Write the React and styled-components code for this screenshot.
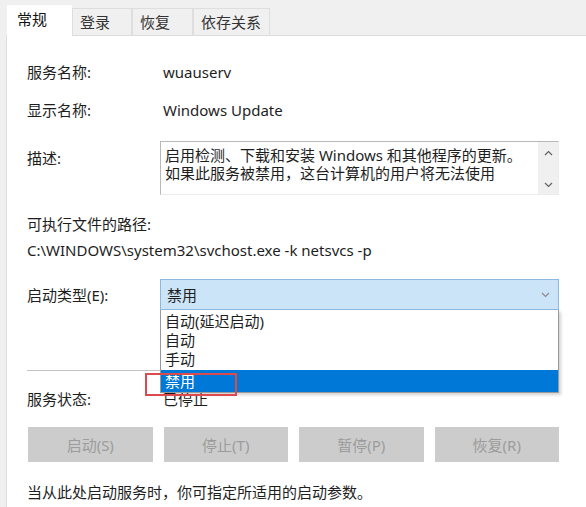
import React from "react";
import styled, { createGlobalStyle } from "styled-components";

const Global = createGlobalStyle`
  html, body { margin: 0; padding: 0; background: #f0f0f0; }
  * { box-sizing: border-box; }
  body {
    font-family: "Noto Sans", "Noto Sans CJK SC", sans-serif;
    font-size: 15px;
    color: #1e1e1e;
  }
`;

const Window = styled.div`
  width: 586px;
  height: 507px;
  display: flex;
  flex-direction: column;
  background: #f0f0f0;
  padding-left: 6px;
  overflow: hidden;
`;

const TabBar = styled.div`
  display: flex;
  align-items: flex-end;
  height: 36px;
  padding-left: 1px;
  border-bottom: 1px solid #dcdcdc;
`;

const Tab = styled.div`
  width: ${(p) => p.$w}px;
  height: ${(p) => (p.$active ? 31 : 27)}px;
  margin-bottom: ${(p) => (p.$active ? -1 : 0)}px;
  padding-left: ${(p) => (p.$active ? 10 : 7)}px;
  padding-top: 3px;
  background: ${(p) => (p.$active ? "#ffffff" : "#f0f0f0")};
  border: 1px solid ${(p) => (p.$active ? "#ffffff" : "#dedede")};
  border-bottom: none;
  border-left: ${(p) => (p.$active ? "none" : "1px solid #dedede")};
  color: ${(p) => (p.$active ? "#111" : "#333")};
  line-height: 20px;
  white-space: nowrap;
  position: relative;
  z-index: ${(p) => (p.$active ? 1 : 0)};
`;

const Panel = styled.div`
  flex: 1;
  background: #ffffff;
  border-left: 1px solid #dcdcdc;
  padding: 26px 27px 0 20px;
  display: flex;
  flex-direction: column;
`;

const Row = styled.div`
  display: grid;
  grid-template-columns: 133px 1fr;
  align-items: ${(p) => p.$align || "center"};
  margin-top: ${(p) => p.$mt || 0}px;
  line-height: 20px;
`;

const Label = styled.div`
  white-space: nowrap;
  margin-top: ${(p) => p.$mt || 0}px;
`;

const Value = styled.div`
  padding-left: 3px;
  white-space: nowrap;
`;

const Line = styled.div`
  margin-top: ${(p) => p.$mt || 0}px;
  line-height: 20px;
  white-space: nowrap;
`;

const DescBox = styled.div`
  height: 54px;
  display: flex;
  border-top: 1px solid #b8b8b8;
  border-left: 1px solid #b8b8b8;
  border-right: 1px solid #ececec;
  border-bottom: 1px solid #ececec;
`;

const DescText = styled.div`
  flex: 1;
  padding: 4px 0 0 4px;
  line-height: 18px;
  white-space: nowrap;
  overflow: hidden;
`;

const DescLine = styled.div`
  height: 18px;
`;

const ScrollBar = styled.div`
  width: 20px;
  background: #f0f0f0;
  display: flex;
  flex-direction: column;
  align-items: center;
  justify-content: space-between;
  padding: 8px 0 6px;
`;

const Chevron = ({ up, color = "#606060" }) => (
  <svg width="9" height="6" viewBox="0 0 9 6">
    <path
      d={up ? "M1 5 L4.5 1.5 L8 5" : "M1 1 L4.5 4.5 L8 1"}
      fill="none"
      stroke={color}
      strokeWidth="1.2"
    />
  </svg>
);

const ComboWrap = styled.div`
  position: relative;
`;

const Combo = styled.div`
  height: 31px;
  background: #cce4f7;
  border: 1px solid #8db8df;
  display: flex;
  align-items: center;
  justify-content: space-between;
  padding: 0 8px 0 6px;
`;

const DropList = styled.div`
  position: absolute;
  top: 100%;
  left: 0;
  right: 0;
  z-index: 5;
  background: #ffffff;
  border: 1px solid #9a9a9a;
  border-top: none;
  box-shadow: 2px 2px 3px rgba(0, 0, 0, 0.18);
  padding-top: 2px;
`;

const Item = styled.div`
  height: ${(p) => (p.$selected ? 22 : 19)}px;
  margin-top: ${(p) => (p.$selected ? 1 : 0)}px;
  line-height: ${(p) => (p.$selected ? 22 : 19)}px;
  padding-left: 4px;
  background: ${(p) => (p.$selected ? "#0078d7" : "transparent")};
  color: ${(p) => (p.$selected ? "#ffffff" : "#1e1e1e")};
`;

const Highlight = styled.div`
  position: absolute;
  left: -16px;
  top: 63px;
  width: 92px;
  height: 23px;
  border: 2px solid #dc4a4e;
  pointer-events: none;
`;

const Separator = styled.div`
  margin-top: ${(p) => p.$mt || 0}px;
  height: 1px;
  background: #c4c4c4;
`;

const Buttons = styled.div`
  margin-top: 18px;
  display: grid;
  grid-template-columns: repeat(4, 1fr);
  column-gap: 11px;
  padding-left: 1px;
`;

const Button = styled.div`
  height: 35px;
  background: #cccccc;
  color: #9c9c9c;
  display: flex;
  align-items: center;
  justify-content: center;
`;

export default function App() {
  return (
    <>
      <Global />
      <Window>
        <TabBar>
          <Tab $active $w={65}>常规</Tab>
          <Tab $w={60}>登录</Tab>
          <Tab $w={61}>恢复</Tab>
          <Tab $w={77}>依存关系</Tab>
        </TabBar>
        <Panel>
          <Row>
            <Label>服务名称:</Label>
            <Value>wuauserv</Value>
          </Row>
          <Row $mt={18}>
            <Label>显示名称:</Label>
            <Value>Windows Update</Value>
          </Row>
          <Row $mt={21} $align="start">
            <Label $mt={7}>描述:</Label>
            <DescBox>
              <DescText>
                <DescLine>启用检测、下载和安装 Windows 和其他程序的更新。</DescLine>
                <DescLine>如果此服务被禁用，这台计算机的用户将无法使用</DescLine>
              </DescText>
              <ScrollBar>
                <Chevron up />
                <Chevron />
              </ScrollBar>
            </DescBox>
          </Row>
          <Line $mt={19}>可执行文件的路径:</Line>
          <Line $mt={6}>C:\WINDOWS\system32\svchost.exe -k netsvcs -p</Line>
          <Row $mt={19}>
            <Label>启动类型(E):</Label>
            <ComboWrap>
              <Combo>
                <span>禁用</span>
                <Chevron color="#8a8a8a" />
              </Combo>
              <DropList>
                <Item>自动(延迟启动)</Item>
                <Item>自动</Item>
                <Item>手动</Item>
                <Item $selected>禁用</Item>
                <Highlight />
              </DropList>
            </ComboWrap>
          </Row>
          <Separator $mt={60} />
          <Row $mt={18}>
            <Label>服务状态:</Label>
            <Value>已停止</Value>
          </Row>
          <Buttons>
            <Button>启动(S)</Button>
            <Button>停止(T)</Button>
            <Button>暂停(P)</Button>
            <Button>恢复(R)</Button>
          </Buttons>
          <Line $mt={20}>当从此处启动服务时，你可指定所适用的启动参数。</Line>
        </Panel>
      </Window>
    </>
  );
}
